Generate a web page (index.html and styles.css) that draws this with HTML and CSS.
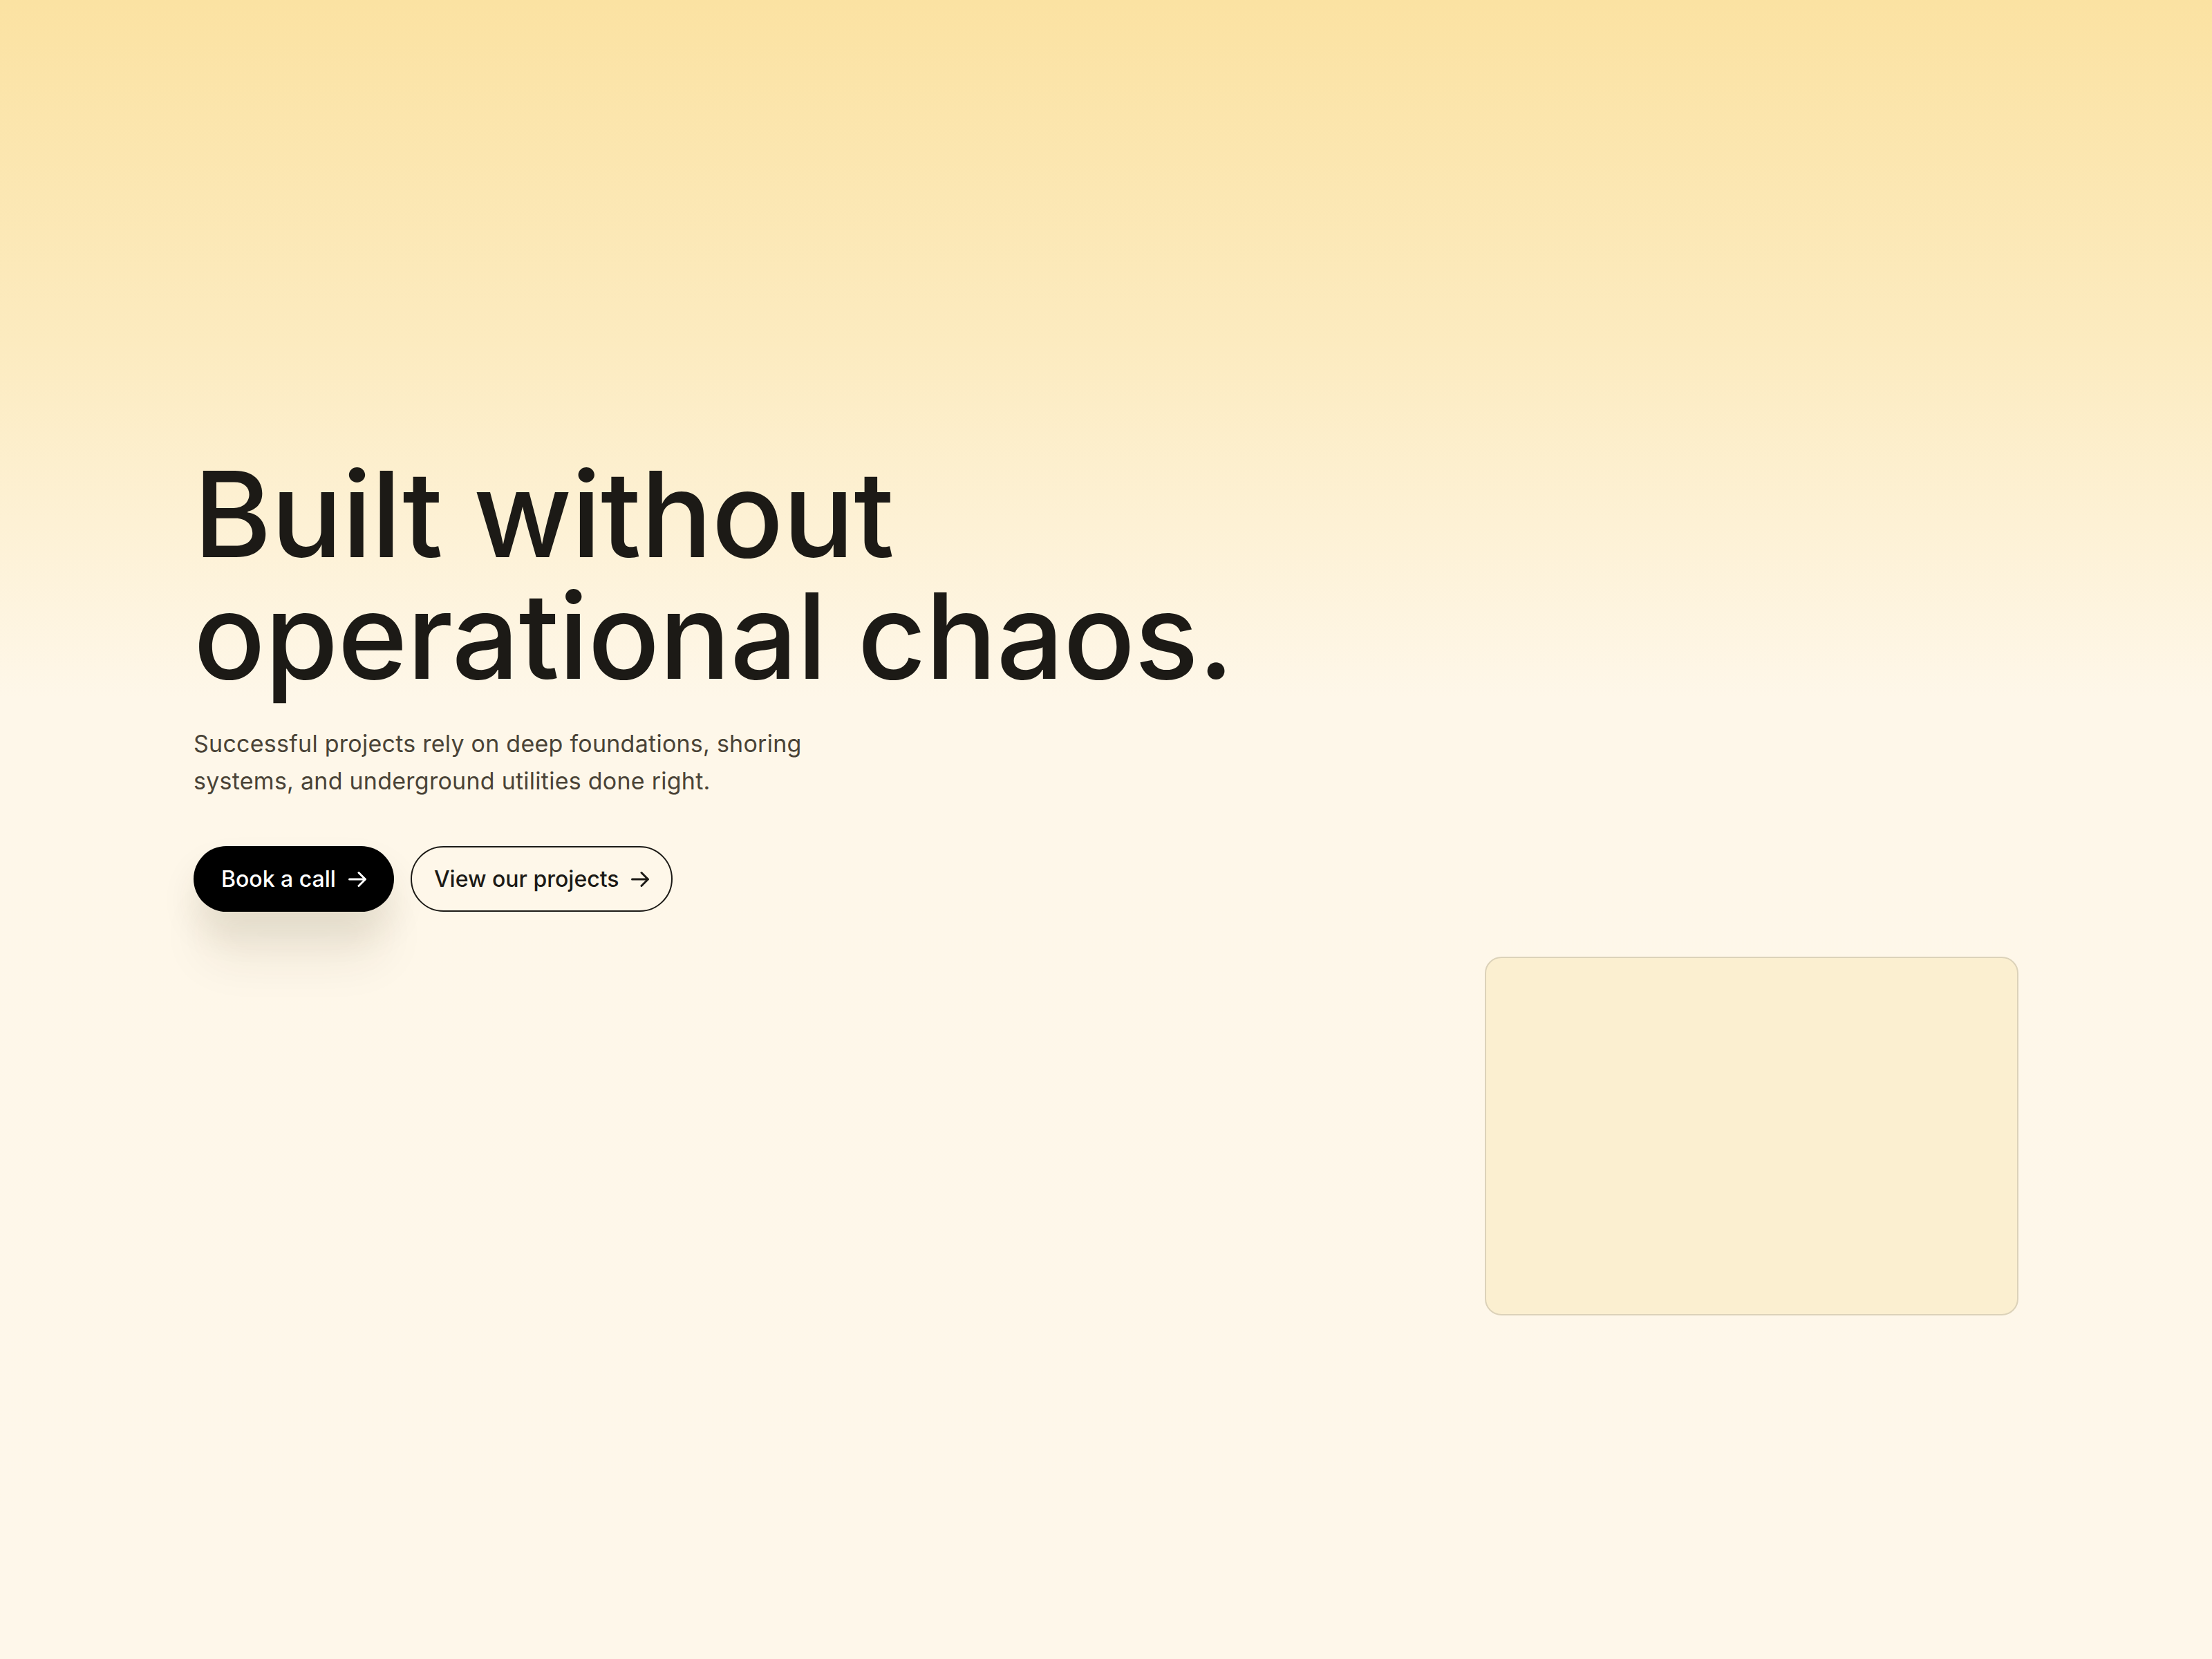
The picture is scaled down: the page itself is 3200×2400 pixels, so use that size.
FILE: index.html
```html
<!DOCTYPE html>
<html lang="en">
<head>
<meta charset="utf-8">
<title>Built without operational chaos</title>
<link rel="stylesheet" href="styles.css">
</head>
<body>
<main class="page">
  <section class="hero">
    <h1 class="hero-title">Built without<br>operational chaos.</h1>
    <p class="hero-text">Successful projects rely on deep foundations, shoring systems, and underground utilities done right.</p>
    <div class="actions">
      <a class="btn btn-primary" href="#">Book a call
        <svg class="arrow" viewBox="0 0 26 24" aria-hidden="true"><path d="M1.5 12H24M15 2.5l9.5 9.5-9.5 9.5"/></svg>
      </a>
      <a class="btn btn-outline" href="#">View our projects
        <svg class="arrow" viewBox="0 0 26 24" aria-hidden="true"><path d="M1.5 12H24M15 2.5l9.5 9.5-9.5 9.5"/></svg>
      </a>
    </div>
  </section>
  <section class="media-row">
    <div class="media-card"></div>
  </section>
</main>
</body>
</html>
```

FILE: styles.css
```css
* { box-sizing: border-box; }
html, body { margin: 0; padding: 0; }
body {
  min-height: 100vh;
  font-family: Inter, "Noto Sans", sans-serif;
  color: #1c1a16;
  background: linear-gradient(180deg, #fbe2a2 0px, #fcebc0 500px, #fef7e9 1010px, #fef7ea 100%) no-repeat, #fef7ea;
}
.page {
  padding: 655px 280px 200px;
}
.hero-title {
  margin: 0;
  font-size: 172px;
  line-height: 176px;
  font-weight: 500;
  letter-spacing: -0.005em;
  color: #1c1a16;
}
.hero-text {
  margin: 42px 0 0;
  max-width: 920px;
  font-size: 34px;
  line-height: 54px;
  letter-spacing: 0.25px;
  color: #4a4337;
  font-weight: 400;
}
.actions {
  display: flex;
  gap: 24px;
  margin-top: 67px;
}
.btn {
  display: inline-flex;
  align-items: center;
  gap: 18px;
  height: 95px;
  padding: 0 40px;
  border-radius: 999px;
  font-size: 32px;
  font-weight: 500;
  text-decoration: none;
  letter-spacing: 0;
}
.btn-primary {
  background: #000;
  color: #fff;
  box-shadow: 0 30px 50px rgba(60, 45, 10, 0.10), 0 80px 70px -10px rgba(60, 45, 10, 0.07);
}
.btn-outline {
  border: 2px solid #1c1a16;
  color: #1c1a16;
  background: transparent;
  padding: 0 32px;
}
.arrow {
  width: 26px;
  height: 24px;
  fill: none;
  stroke: currentColor;
  stroke-width: 3;
  stroke-linecap: round;
  stroke-linejoin: round;
}
.media-row {
  display: flex;
  justify-content: flex-end;
  margin-top: 65px;
}
.media-card {
  width: 772px;
  height: 519px;
  border-radius: 24px;
  border: 2px solid #dcd2b9;
  background: #fbefd0;
}
```
